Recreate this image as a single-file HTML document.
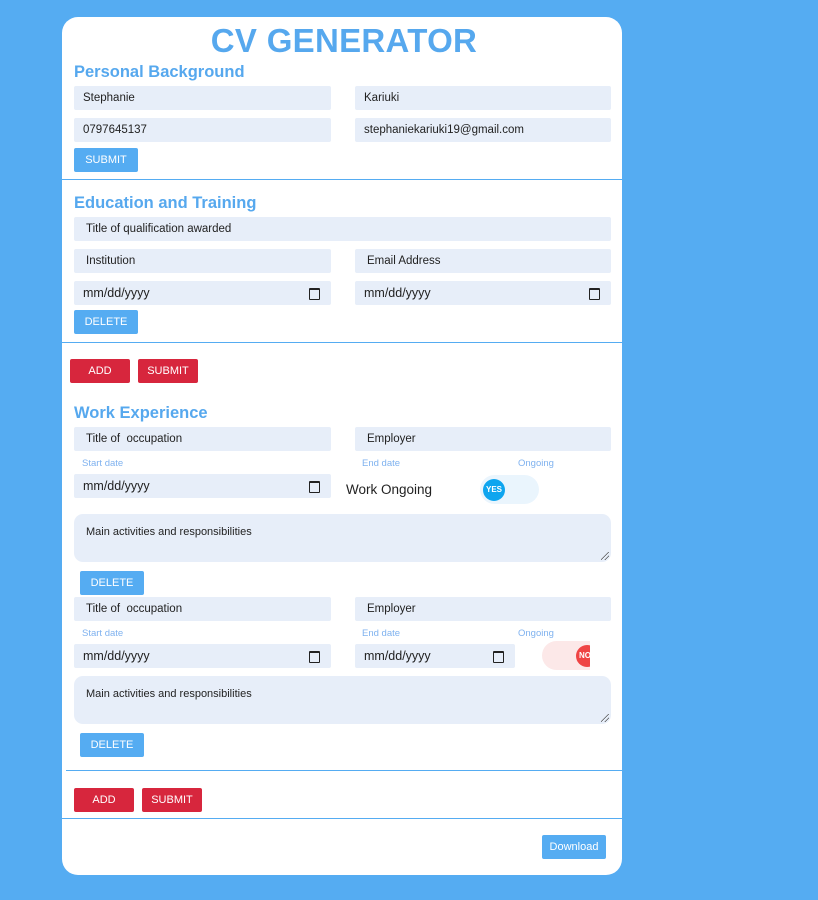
<!DOCTYPE html>
<html><head><meta charset="utf-8"><style>
*{box-sizing:border-box;margin:0;padding:0}
body{width:818px;height:900px;background:#55acf2;font-family:"Liberation Sans",sans-serif;position:relative;overflow:hidden}
.card{position:absolute;left:62px;top:17px;width:560px;height:858px;background:#fff;border-radius:16px}
.a{position:absolute}
.in{position:absolute;height:24px;background:#e7eef9;border-radius:2px;font-size:11.5px;color:#222;line-height:24px;padding-left:12px}
.dt{padding-left:9px;font-size:12.5px}
.dt:after{content:"";position:absolute;right:11px;top:7px;width:9px;height:9px;border:1.5px solid #222;border-top-width:2.5px;border-radius:1px}
.h{position:absolute;color:#56a8ee;font-weight:bold;font-size:16.5px}
.btn{position:absolute;height:24px;border-radius:2px;color:#fff;font-size:11px;text-align:center;line-height:24px}
.b{background:#55acf2}.r{background:#d7263d}
.hr{position:absolute;height:1px;background:#55acf2}
.lb{position:absolute;font-size:9.5px;color:#7fb2ef}
.ta{position:absolute;background:#e7eef9;border-radius:9px;font-size:11px;color:#222;padding:12px 12px}
.ta:after{content:"";position:absolute;right:2px;bottom:2px;width:8px;height:8px;background:linear-gradient(135deg,transparent 45%,#555 45%,#555 52%,transparent 52%,transparent 70%,#555 70%,#555 77%,transparent 77%)}
</style></head><body>
<div class="card"></div>
<div class="a" style="left:0;width:688px;top:22px;text-align:center;font-size:33px;font-weight:bold;color:#56a8ee;letter-spacing:0.3px">CV GENERATOR</div>
<div class="h" style="left:74px;top:63px">Personal Background</div>
<div class="in" style="left:74px;top:86px;width:257px;padding-left:9px">Stephanie</div>
<div class="in" style="left:355px;top:86px;width:256px;padding-left:9px">Kariuki</div>
<div class="in" style="left:74px;top:118px;width:257px;padding-left:9px">0797645137</div>
<div class="in" style="left:355px;top:118px;width:256px;padding-left:9px">stephaniekariuki19@gmail.com</div>
<div class="btn b" style="left:74px;top:148px;width:64px">SUBMIT</div>
<div class="hr" style="left:62px;top:179px;width:560px"></div>
<div class="h" style="left:74px;top:194px">Education and Training</div>
<div class="in" style="left:74px;top:217px;width:537px">Title of qualification awarded</div>
<div class="in" style="left:74px;top:249px;width:257px">Institution</div>
<div class="in" style="left:355px;top:249px;width:256px">Email Address</div>
<div class="in dt" style="left:74px;top:281px;width:257px">mm/dd/yyyy</div>
<div class="in dt" style="left:355px;top:281px;width:256px">mm/dd/yyyy</div>
<div class="btn b" style="left:74px;top:310px;width:64px">DELETE</div>
<div class="hr" style="left:62px;top:342px;width:560px"></div>
<div class="btn r" style="left:70px;top:359px;width:60px">ADD</div>
<div class="btn r" style="left:138px;top:359px;width:60px">SUBMIT</div>
<div class="h" style="left:74px;top:404px">Work Experience</div>
<div class="in" style="left:74px;top:427px;width:257px">Title of &nbsp;occupation</div>
<div class="in" style="left:355px;top:427px;width:256px">Employer</div>
<div class="lb" style="left:82px;top:458px">Start date</div>
<div class="lb" style="left:362px;top:458px">End date</div>
<div class="lb" style="left:518px;top:458px">Ongoing</div>
<div class="in dt" style="left:74px;top:474px;width:257px">mm/dd/yyyy</div>
<div class="a" style="left:346px;top:482px;font-size:13.5px;color:#222">Work Ongoing</div>
<div class="a" style="left:480px;top:475px;width:59px;height:29px;border-radius:15px;background:#eaf5fd"></div>
<div class="a" style="left:483px;top:479px;width:22px;height:22px;border-radius:50%;background:#0ea5ef;color:#fff;font-size:8px;font-weight:bold;text-align:center;line-height:22px">YES</div>
<div class="ta" style="left:74px;top:514px;width:537px;height:48px">Main activities and responsibilities</div>
<div class="btn b" style="left:80px;top:571px;width:64px">DELETE</div>
<div class="in" style="left:74px;top:597px;width:257px">Title of &nbsp;occupation</div>
<div class="in" style="left:355px;top:597px;width:256px">Employer</div>
<div class="lb" style="left:82px;top:628px">Start date</div>
<div class="lb" style="left:362px;top:628px">End date</div>
<div class="lb" style="left:518px;top:628px">Ongoing</div>
<div class="in dt" style="left:74px;top:644px;width:257px">mm/dd/yyyy</div>
<div class="in dt" style="left:355px;top:644px;width:160px">mm/dd/yyyy</div>
<div class="a" style="left:542px;top:641px;width:48px;height:29px;border-radius:15px 0 0 15px;background:#fce8e8;overflow:hidden">
<div class="a" style="left:34px;top:4px;width:22px;height:22px;border-radius:50%;background:#ef4444;color:#fff;font-size:8px;font-weight:bold;line-height:22px;padding-left:3px">NO</div></div>
<div class="ta" style="left:74px;top:676px;width:537px;height:48px">Main activities and responsibilities</div>
<div class="btn b" style="left:80px;top:733px;width:64px">DELETE</div>
<div class="hr" style="left:66px;top:770px;width:556px"></div>
<div class="btn r" style="left:74px;top:788px;width:60px">ADD</div>
<div class="btn r" style="left:142px;top:788px;width:60px">SUBMIT</div>
<div class="hr" style="left:62px;top:818px;width:560px"></div>
<div class="btn b" style="left:542px;top:835px;width:64px">Download</div>
</body></html>
